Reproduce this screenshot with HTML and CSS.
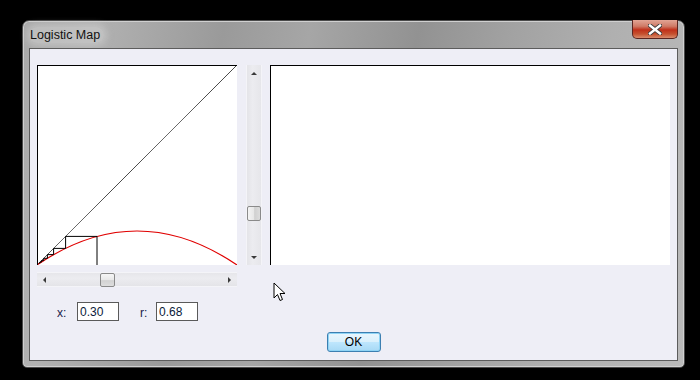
FILE: index.html
```html
<!DOCTYPE html>
<html lang="en">
<head>
    <meta charset="UTF-8">
    <title>Logistic Map</title>
    <link rel="stylesheet" href="styles.css">
</head>
<body>
    <div class="window">
        <div class="titlebar">
            <span class="title">Logistic Map</span>
            <span class="close-btn">
                <svg width="14" height="11" viewBox="0 0 14 11">
                    <path d="M2 1.5 L12 9.5 M12 1.5 L2 9.5" stroke="#3a3a3a" stroke-width="4.2" stroke-linecap="square"/>
                    <path d="M2 1.5 L12 9.5 M12 1.5 L2 9.5" stroke="#fff" stroke-width="2.4" stroke-linecap="square"/>
                </svg>
            </span>
        </div>
        <div class="client">
            <div class="plots">
                <div class="plot plot-map">
                    <svg width="200" height="200" viewBox="0 0 200 200">
                        <line x1="0" y1="200" x2="200" y2="0" stroke="#000" stroke-width="1" stroke-dasharray="1 0.4"/>
                        <path d="M0 200 Q100 132 200 200" fill="none" stroke="#e00000" stroke-width="1.2"/>
                        <polyline fill="none" stroke="#000" stroke-width="1"
                            points="60,200 60,171.4 28.6,171.4 28.6,183.4 16.6,183.4 16.6,189.6 10.4,189.6 10.4,193.3 6.7,193.3 6.7,195.6 4.4,195.6 4.4,197.1 2.9,197.1 2.9,198.1 1.9,198.1"/>
                        <line x1="0.5" y1="0" x2="0.5" y2="200" stroke="#000"/>
                        <line x1="0" y1="0.5" x2="200" y2="0.5" stroke="#000"/>
                    </svg>
                </div>
                <div class="vscroll">
                    <span class="arrow-up"></span>
                    <div class="vtrack">
                        <span class="vthumb"></span>
                    </div>
                    <span class="arrow-down"></span>
                </div>
                <div class="plot plot-series"></div>
            </div>
            <div class="hscroll">
                <span class="arrow-left"></span>
                <div class="htrack">
                    <span class="hthumb"></span>
                </div>
                <span class="arrow-right"></span>
            </div>
            <div class="fields">
                <label class="field-label">x:</label>
                <input class="field" type="text" value="0.30">
                <label class="field-label label-r">r:</label>
                <input class="field" type="text" value="0.68">
                <svg class="cursor" width="14" height="20" viewBox="0 0 14 20">
                    <path d="M1 1 L1 16 L4.5 12.5 L7 18.5 L9.5 17.5 L7 11.5 L12 11.5 Z" fill="#fff" stroke="#000" stroke-width="1"/>
                </svg>
            </div>
            <div class="actions">
                <button class="ok-btn">OK</button>
            </div>
        </div>
    </div>
</body>
</html>
```

FILE: styles.css
```css
body {
    margin: 0;
    background: #000;
    width: 700px;
    height: 380px;
    overflow: hidden;
    font-family: "Liberation Sans", Arial, sans-serif;
    font-size: 12px;
}

.window {
    margin: 20px 0 0 22px;
    width: 663px;
    height: 348px;
    box-sizing: border-box;
    padding: 0 6px 6px 6px;
    border: 1px solid #4a4a4a;
    border-radius: 7px 7px 5px 5px;
    background: linear-gradient(100deg, #a9a9a9 0%, #b2b2b2 10%, #9a9a9a 28%, #a6a6a6 40%, #929292 55%, #a2a2a2 68%, #b0b0b0 82%, #bababa 100%);
    box-shadow: inset 0 0 0 1px #d0d0d0;
    display: flex;
    flex-direction: column;
}

.titlebar {
    height: 27px;
    display: flex;
    justify-content: space-between;
    align-items: flex-start;
}

.title {
    margin: 6px 0 0 0;
    padding: 0 4px 0 1px;
    color: #111;
    font-size: 12.5px;
    line-height: 16px;
    border-radius: 8px;
    background: rgba(205, 205, 205, 0.55);
    box-shadow: 0 0 6px 3px rgba(205, 205, 205, 0.55);
}

.close-btn {
    width: 46px;
    height: 19px;
    margin-top: -1px;
    box-sizing: border-box;
    border: 1px solid #5a2520;
    border-top: none;
    border-radius: 0 0 5px 5px;
    background: linear-gradient(180deg, #e2a595 0%, #cf7a66 35%, #c0301a 55%, #c5512f 78%, #d98b6c 100%);
    display: flex;
    align-items: center;
    justify-content: center;
}

.close-btn svg {
    display: block;
}

.client {
    flex: 1;
    background: #eeeef6;
    border: 1px solid #5c5c5c;
    display: flex;
    flex-direction: column;
    padding: 16px 7px 0 7px;
}

.plots {
    display: flex;
    height: 200px;
}

.plot {
    background: #fff;
    height: 200px;
}

.plot-map {
    width: 200px;
}

.plot-map svg {
    display: block;
}

.plot-series {
    width: 400px;
    margin-left: 8px;
    border-top: 1px solid #000;
    border-left: 1px solid #000;
    box-sizing: border-box;
}

.vscroll {
    width: 16px;
    margin-left: 9px;
    box-sizing: border-box;
    background: linear-gradient(90deg, #e4e4e8 0%, #ececf0 40%, #e6e6ea 100%);
    border-left: 1px solid #f4f4f8;
    border-right: 1px solid #f4f4f8;
    display: flex;
    flex-direction: column;
    align-items: center;
}

.arrow-up,
.arrow-down {
    width: 0;
    height: 0;
    border-left: 3px solid transparent;
    border-right: 3px solid transparent;
}

.arrow-up {
    margin-top: 7px;
    border-bottom: 3px solid #3a3a3a;
}

.arrow-down {
    margin-bottom: 6px;
    border-top: 3px solid #3a3a3a;
}

.vtrack {
    flex: 1;
    width: 100%;
    display: flex;
    flex-direction: column;
    padding-top: 131px;
}

.vthumb {
    width: 14px;
    height: 15px;
    box-sizing: border-box;
    border: 1px solid #8a8a8a;
    border-radius: 2px;
    background: linear-gradient(90deg, #f4f4f4 0%, #e6e6e6 50%, #d0d0d0 55%, #dcdcdc 100%);
}

.hscroll {
    width: 200px;
    height: 15px;
    margin-top: 7px;
    box-sizing: border-box;
    background: linear-gradient(180deg, #e6e6ea 0%, #ececf0 40%, #e4e4e8 100%);
    border-top: 1px solid #f4f4f8;
    border-bottom: 1px solid #f4f4f8;
    display: flex;
    align-items: center;
}

.arrow-left,
.arrow-right {
    width: 0;
    height: 0;
    border-top: 3px solid transparent;
    border-bottom: 3px solid transparent;
}

.arrow-left {
    margin-left: 6px;
    border-right: 3px solid #3a3a3a;
}

.arrow-right {
    margin-right: 6px;
    border-left: 3px solid #3a3a3a;
}

.htrack {
    flex: 1;
    height: 100%;
    display: flex;
    align-items: center;
    padding-left: 54px;
}

.hthumb {
    width: 15px;
    height: 14px;
    box-sizing: border-box;
    border: 1px solid #8a8a8a;
    border-radius: 2px;
    background: linear-gradient(180deg, #f6f6f6 0%, #e8e8e8 50%, #d2d2d2 55%, #dedede 100%);
}

.fields {
    display: flex;
    align-items: flex-start;
    height: 30px;
    margin-top: 15px;
    padding-left: 20px;
}

.field-label {
    color: #1a1a4a;
    font-size: 12px;
    margin-top: 4px;
    width: 20px;
}

.label-r {
    margin-left: 21px;
    width: 16px;
}

.field {
    width: 42px;
    height: 19px;
    box-sizing: border-box;
    border: 1px solid #5a5a5a;
    padding: 0 2px;
    font-family: "Liberation Sans", Arial, sans-serif;
    font-size: 12px;
    color: #0a1a3a;
    background: #fff;
    outline: none;
}

.cursor {
    margin: -20px 0 0 75px;
}

.actions {
    display: flex;
    justify-content: center;
}

.ok-btn {
    width: 54px;
    height: 20px;
    border: 1px solid #3c7fb1;
    border-radius: 3px;
    background: linear-gradient(180deg, #eaf6fd 0%, #d9f0fc 50%, #bee6fd 51%, #a7d9f5 100%);
    box-shadow: inset 0 0 0 1px #8fd4f5;
    font-family: "Liberation Sans", Arial, sans-serif;
    font-size: 12px;
    color: #000;
    padding: 0;
}
```
